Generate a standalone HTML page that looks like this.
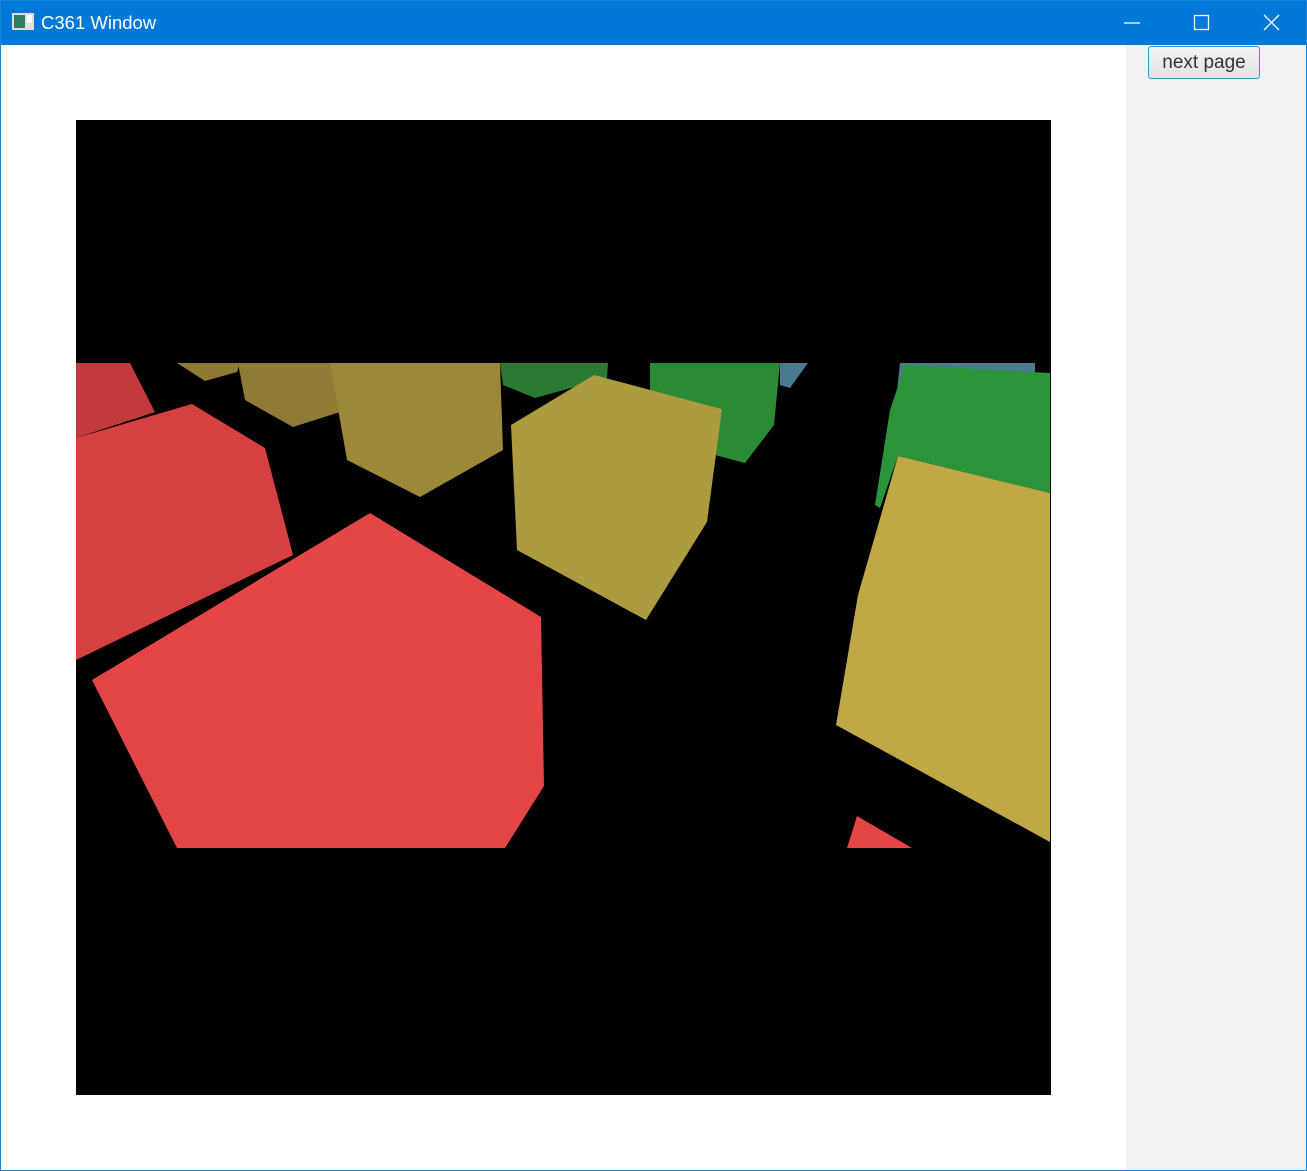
<!DOCTYPE html>
<html><head><meta charset="utf-8"><style>
html,body{margin:0;padding:0;width:1307px;height:1171px;overflow:hidden;background:#fff;font-family:"Liberation Sans",sans-serif}
.tb{position:absolute;left:0;top:0;width:1307px;height:45px;background:#0078d7}
.title{position:absolute;left:41px;top:12px;color:#fff;font-size:18.5px}
.side{position:absolute;left:1126px;top:45px;width:180px;height:1125px;background:#f2f2f2}
.frame{position:absolute;left:0;top:0;width:1305px;height:1169px;border:1px solid #1883d7;pointer-events:none}
.btn{position:absolute;left:1148px;top:46px;width:112px;height:33px;border:1px solid #2b9ad6;border-radius:3px;background:linear-gradient(#f4f4f4,#e2e2e2);box-sizing:border-box;font-size:19px;color:#333;text-align:center;line-height:31px}
</style></head><body>
<div class="tb"></div>
<svg style="position:absolute;left:12px;top:13px" width="22" height="18"><rect x="0" y="0" width="22" height="17" fill="#ddd"/><rect x="2" y="2" width="11" height="13" fill="#2e7d5b"/><rect x="15" y="2" width="5" height="8" fill="#fff"/></svg>
<div class="title">C361 Window</div>
<svg style="position:absolute;left:1120px;top:12px" width="170" height="22" stroke="#fff" stroke-width="1.3" fill="none">
<line x1="4" y1="11" x2="20" y2="11"/><rect x="74.5" y="3.5" width="14" height="14"/><line x1="144" y1="3" x2="159" y2="18"/><line x1="159" y1="3" x2="144" y2="18"/></svg>
<div class="side"></div>
<div class="btn">next page</div>
<svg style="position:absolute;left:0;top:0" width="1307" height="1171">
<rect x="76" y="120" width="975" height="975" fill="#000"/>
<polygon points="76,363 130,363 155,412 76,438" fill="#c23a3c"/>
<polygon points="76,438 192,404 265,448 293,555 76,660" fill="#d74041"/>
<polygon points="92,680 370,513 541,617 544,786 505,848 177,848" fill="#e44546"/>
<polygon points="177,363 240,363 237,372 205,381" fill="#8f7a35"/>
<polygon points="238,363 330,363 340,412 293,427 245,400" fill="#8f7b36"/>
<polygon points="330,363 500,363 503,450 420,497 347,460" fill="#9c8839"/>
<polygon points="500,363 608,363 607,378 535,398 503,385" fill="#2a7a32"/>
<polygon points="650,363 780,363 774,425 745,463 715,455 722,409 650,390" fill="#2b8a35"/>
<polygon points="511,425 594,375 722,409 707,522 646,620 517,550" fill="#ad9b40"/>
<polygon points="780,363 808,363 790,388 780,385" fill="#4a7a90"/>
<polygon points="900,363 1035,363 1035,372 895,410" fill="#4a7a90"/>
<polygon points="905,365 1050,373 1050,493 898,456 880,508 875,505 890,410" fill="#2a943a"/>
<polygon points="898,456 1050,493 1050,842 836,725 858,595" fill="#bfa845"/>
<polygon points="857,816 912,848 847,848" fill="#e44546"/>
</svg>
<div class="frame"></div>
</body></html>
